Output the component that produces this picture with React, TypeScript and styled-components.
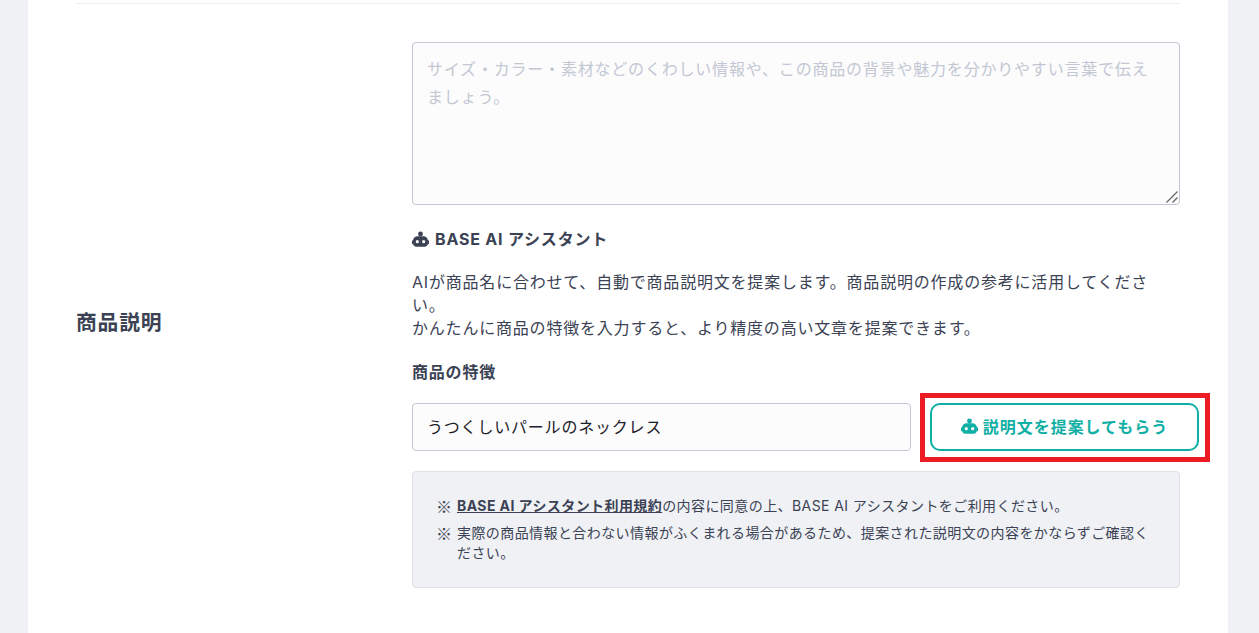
import styled, { createGlobalStyle } from "styled-components";

const GlobalStyle = createGlobalStyle`
  html, body {
    margin: 0;
    height: 100%;
    overflow: hidden;
    background: #eff1f5;
  }
  body {
    font-family: "Inter", "Noto Sans CJK JP", sans-serif;
    letter-spacing: 0.05em;
    color: #3b4254;
  }
`;

const Card = styled.main`
  margin: 0 31px 0 28px;
  height: 633px;
  padding: 3px 48px 0;
  box-sizing: border-box;
  background: #fff;
`;

const Divider = styled.hr`
  margin: 0;
  border: none;
  border-top: 1px solid #eceef2;
`;

const Section = styled.section`
  display: grid;
  grid-template-columns: 336px 768px;
  padding-top: 38px;
`;

const Label = styled.h2`
  margin: 0;
  align-self: center;
  font-size: 20.8px;
  font-weight: 700;
  line-height: 30px;
`;

const Body = styled.div`
  display: flex;
  flex-direction: column;
  padding-bottom: 16px;
`;

const DescriptionWrap = styled.div`
  position: relative;
  height: 163px;
`;

const Description = styled.textarea`
  display: block;
  box-sizing: border-box;
  width: 100%;
  height: 100%;
  padding: 12px 14px;
  border: 1px solid #c3c8d4;
  border-radius: 4px;
  background: #fcfcfc;
  font: 400 16px/28px "Inter", "Noto Sans CJK JP", sans-serif;
  letter-spacing: 0.05em;
  color: #3b4254;
  outline: none;
  resize: none;

  &::placeholder {
    color: #c2c7d3;
    opacity: 1;
  }
`;

const Grip = styled.svg`
  position: absolute;
  right: 2px;
  bottom: 2px;
  pointer-events: none;
`;

const AiTitle = styled.h3`
  display: flex;
  align-items: center;
  gap: 6px;
  margin: 23px 0 0;
  font-size: 16px;
  font-weight: 700;
  line-height: 22px;
`;

const Intro = styled.p`
  margin: 21px 0 0;
  font-size: 16px;
  line-height: 23px;
`;

const FieldTitle = styled.h4`
  margin: 20px 0 0;
  font-size: 16px;
  font-weight: 700;
  line-height: 24px;
`;

const FieldRow = styled.div`
  display: grid;
  grid-template-columns: 499px 269px;
  gap: 19px;
  margin-top: 19px;
`;

const Keyword = styled.input`
  box-sizing: border-box;
  height: 48px;
  padding: 0 14px 2px;
  border: 1px solid #c3c8d4;
  border-radius: 4px;
  background: #fcfcfc;
  font: 400 16px "Inter", "Noto Sans CJK JP", sans-serif;
  letter-spacing: 0.05em;
  color: #1c2029;
  outline: none;
`;

const SuggestSlot = styled.div`
  position: relative;
`;

const SuggestButton = styled.button`
  display: flex;
  align-items: center;
  justify-content: center;
  gap: 5px;
  box-sizing: border-box;
  width: 100%;
  height: 48px;
  padding: 0 0 2px;
  border: 2px solid #10afa5;
  border-radius: 10px;
  background: #fff;
  color: #10afa5;
  font: 700 16px "Inter", "Noto Sans CJK JP", sans-serif;
  letter-spacing: 0.06em;
  cursor: pointer;
`;

const Highlight = styled.span`
  position: absolute;
  inset: -10px -11px -11px -10px;
  border: 5px solid #ed1c24;
  pointer-events: none;
`;

const Notice = styled.ul`
  box-sizing: border-box;
  height: 117px;
  margin: 20px 0 0;
  padding: 24px 24px 0;
  list-style: none;
  border: 1px solid #dfe1e7;
  border-radius: 4px;
  background: #eff1f5;
  font-size: 14px;
  letter-spacing: 0.03em;
  line-height: 20px;
`;

const NoticeItem = styled.li`
  display: grid;
  grid-template-columns: 20px 1fr;

  & + & {
    margin-top: 7px;
  }
`;

const Mark = styled.span`
  font-family: "Noto Sans CJK JP", sans-serif;
  font-size: 16px;
  margin-left: -1px;
`;

const TermsLink = styled.a`
  font-weight: 700;
  color: inherit;
  text-decoration: underline;
`;

function RobotIcon({ size }: { size: number }) {
  return (
    <svg width={size} height={size} viewBox="0 0 16 16" aria-hidden="true">
      <circle cx="8" cy="2.800" r="2.300" fill="currentColor" />
      <path
        fill="currentColor"
        fillRule="evenodd"
        d="M5.500 5h5c2.600 0 4.500 1.900 4.500 4.500v2c0 1.900-1.300 3.300-3.200 3.300H4.200C2.300 14.800 1 13.400 1 11.500v-2C1 6.900 2.900 5 5.500 5zM5 8.500a1.500 1.500 0 1 0 0 3 1.500 1.500 0 0 0 0-3zm6 0a1.500 1.500 0 1 0 0 3 1.500 1.500 0 0 0 0-3z"
      />
      <rect x="0" y="8.800" width="1.400" height="3.600" rx="0.700" fill="currentColor" />
      <rect x="14.600" y="8.800" width="1.400" height="3.600" rx="0.700" fill="currentColor" />
    </svg>
  );
}

export default function App() {
  return (
    <>
      <GlobalStyle />
      <Card>
        <Divider />
        <Section>
          <Label>商品説明</Label>
          <Body>
            <DescriptionWrap>
              <Description placeholder="サイズ・カラー・素材などのくわしい情報や、この商品の背景や魅力を分かりやすい言葉で伝えましょう。" />
              <Grip width="12" height="12" viewBox="0 0 12 12" aria-hidden="true">
                <path d="M0.500 11.500L11.500 0.500M6.500 11.500L11.500 6.500" stroke="#666" strokeWidth="1.300" fill="none" />
              </Grip>
            </DescriptionWrap>
            <AiTitle>
              <RobotIcon size={17} />
              BASE AI アシスタント
            </AiTitle>
            <Intro>
              AIが商品名に合わせて、自動で商品説明文を提案します。商品説明の作成の参考に活用してください。
              <br />
              かんたんに商品の特徴を入力すると、より精度の高い文章を提案できます。
            </Intro>
            <FieldTitle>商品の特徴</FieldTitle>
            <FieldRow>
              <Keyword defaultValue="うつくしいパールのネックレス" />
              <SuggestSlot>
                <SuggestButton>
                  <RobotIcon size={17} />
                  説明文を提案してもらう
                </SuggestButton>
                <Highlight />
              </SuggestSlot>
            </FieldRow>
            <Notice>
              <NoticeItem>
                <Mark>※</Mark>
                <span>
                  <TermsLink href="#">BASE AI アシスタント利用規約</TermsLink>
                  の内容に同意の上、BASE AI アシスタントをご利用ください。
                </span>
              </NoticeItem>
              <NoticeItem>
                <Mark>※</Mark>
                <span>
                  実際の商品情報と合わない情報がふくまれる場合があるため、提案された説明文の内容をかならずご確認ください。
                </span>
              </NoticeItem>
            </Notice>
          </Body>
        </Section>
      </Card>
    </>
  );
}
